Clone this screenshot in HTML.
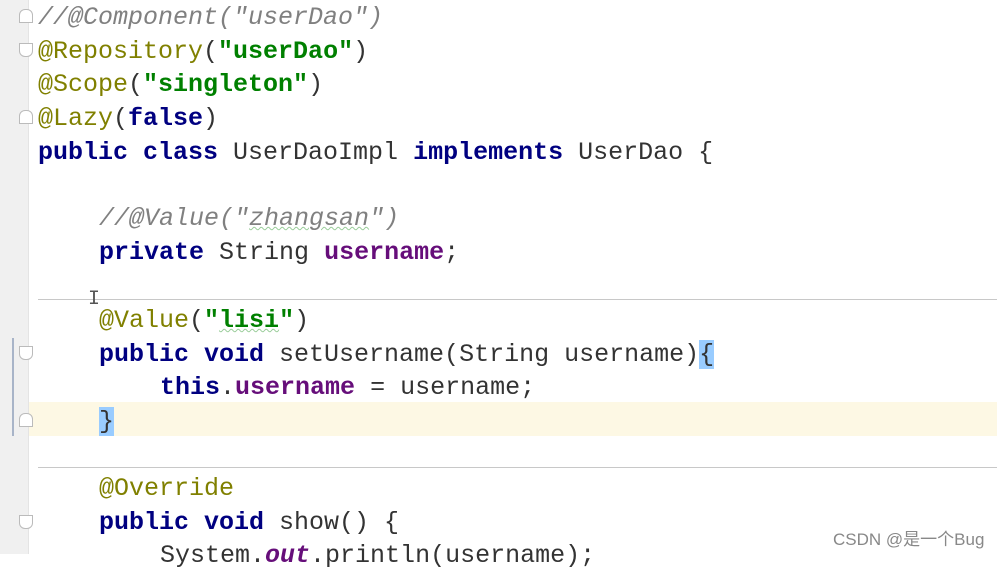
<!DOCTYPE html>
<html><head><meta charset="utf-8"><style>
body{margin:0;width:997px;height:554px;overflow:hidden;background:#fff;position:relative;font-family:"Liberation Mono",monospace;font-size:25px;}
.g{position:absolute;left:0;top:0;width:28px;height:554px;background:#f0f0f0;border-right:1px solid #e4e4e4}
.l{position:absolute;height:34px;line-height:34px;white-space:pre;color:#333}
.k{color:#000080;font-weight:bold}
.s{color:#008000;font-weight:bold}
.a{color:#808000}
.c{color:#808080;font-style:italic}
.f{color:#660e7a;font-weight:bold}
.hl{position:absolute;left:29px;right:0;top:402px;height:34px;background:#fdf8e4}
.sep{position:absolute;left:38px;right:0;height:1px;background:#c8c8c8}
.br{background:#99ccff}
.wm{position:absolute;left:833px;top:525px;font-family:"Liberation Sans","Noto Sans CJK SC",sans-serif;font-size:17px;color:#888}
.fold{position:absolute;left:19px;width:14px;height:14px;border:1px solid #bbb;background:#fff;box-sizing:border-box}
.u{text-decoration:underline wavy #9c9;text-decoration-thickness:1px}
</style></head><body>
<div class="g"></div>
<div class="hl"></div>
<div class="sep" style="top:299px"></div>
<div class="sep" style="top:467px"></div>
<div style="position:absolute;left:12px;top:338px;width:2px;height:98px;background:#a8b4c8"></div>
<div class="fold" style="top:9px;border-radius:6px 6px 0 0"></div>
<div class="fold" style="top:43px;border-radius:0 0 6px 6px"></div>
<div class="fold" style="top:110px;border-radius:6px 6px 0 0"></div>
<div class="fold" style="top:346px;border-radius:0 0 6px 6px"></div>
<div class="fold" style="top:413px;border-radius:6px 6px 0 0"></div>
<div class="fold" style="top:515px;border-radius:0 0 6px 6px"></div>
<div class="l c" style="left:38px;top:1px">//@Component("userDao")</div>
<div class="l" style="left:38px;top:35px"><span class="a">@Repository</span>(<span class="s">"userDao"</span>)</div>
<div class="l" style="left:38px;top:68px"><span class="a">@Scope</span>(<span class="s">"singleton"</span>)</div>
<div class="l" style="left:38px;top:102px"><span class="a">@Lazy</span>(<span class="k">false</span>)</div>
<div class="l" style="left:38px;top:136px"><span class="k">public class</span> UserDaoImpl <span class="k">implements</span> UserDao {</div>
<div class="l c" style="left:99px;top:202px">//@Value("<span class="u">zhangsan</span>")</div>
<div class="l" style="left:99px;top:236px"><span class="k">private</span> String <span class="f">username</span>;</div>
<div class="l" style="left:88px;top:283px;font-size:20px;color:#555">I</div>
<div class="l" style="left:99px;top:304px"><span class="a">@Value</span>(<span class="s">"<span class="u">lisi</span>"</span>)</div>
<div class="l" style="left:99px;top:338px"><span class="k">public void</span> setUsername(String username)<span class="br">{</span></div>
<div class="l" style="left:160px;top:371px"><span class="k">this</span>.<span class="f">username</span> = username;</div>
<div class="l" style="left:99px;top:405px"><span class="br">}</span></div>
<div class="l" style="left:99px;top:472px"><span class="a">@Override</span></div>
<div class="l" style="left:99px;top:506px"><span class="k">public void</span> show() {</div>
<div class="l" style="left:160px;top:539px">System.<span class="f" style="font-style:italic">out</span>.println(username);</div>
<div class="wm">CSDN @是一个Bug</div>
</body></html>
